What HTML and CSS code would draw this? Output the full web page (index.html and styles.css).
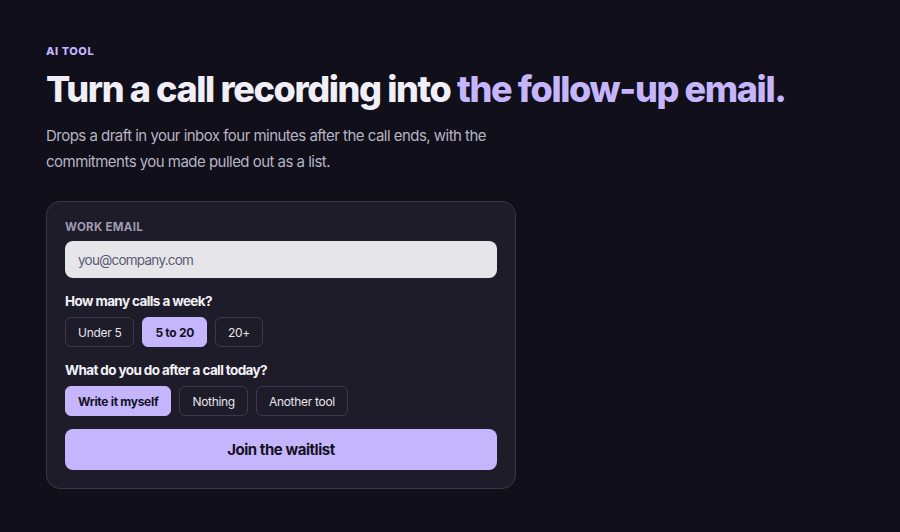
FILE: index.html
```html
<!DOCTYPE html>
<html lang="en">
<head>
<meta charset="utf-8">
<link rel="stylesheet" href="styles.css">
</head>
<body>
<main class="page">
  <p class="eyebrow">AI TOOL</p>
  <h1 class="title">Turn a call recording into <span class="accent">the follow-up email.</span></h1>
  <p class="lede">Drops a draft in your inbox four minutes after the call ends, with the commitments you made pulled out as a list.</p>
  <form class="card">
    <label class="label" for="email">WORK EMAIL</label>
    <input class="input" id="email" type="email" placeholder="you@company.com">
    <p class="question">How many calls a week?</p>
    <div class="chips">
      <button type="button" class="chip">Under 5</button>
      <button type="button" class="chip chip-on">5 to 20</button>
      <button type="button" class="chip">20+</button>
    </div>
    <p class="question">What do you do after a call today?</p>
    <div class="chips">
      <button type="button" class="chip chip-on">Write it myself</button>
      <button type="button" class="chip">Nothing</button>
      <button type="button" class="chip">Another tool</button>
    </div>
    <button type="button" class="submit">Join the waitlist</button>
  </form>
</main>
</body>
</html>
```
FILE: styles.css
```css
* { box-sizing: border-box; }
html, body { margin: 0; padding: 0; }
body {
  background: #100f1a;
  font-family: Inter, "Noto Sans", sans-serif;
  color: #ece9f5;
  height: 532px;
  overflow: hidden;
}
.page {
  padding: 44px 46px 0;
}
.eyebrow {
  margin: 0;
  font-size: 11px;
  font-weight: 800;
  letter-spacing: 0.05em;
  color: #c4b5fd;
  line-height: 14px;
}
.title {
  margin: 9px 0 0;
  font-size: 36px;
  font-weight: 800;
  letter-spacing: -0.038em;
  line-height: 44px;
  color: #f0eef7;
}
.accent { color: #c4b5fd; }
.lede {
  margin: 12px 0 0;
  max-width: 460px;
  font-size: 15px;
  line-height: 26px;
  letter-spacing: -0.035em;
  color: #b7b4c4;
}
.card {
  margin-top: 26px;
  width: 470px;
  background: #1e1c29;
  border: 1px solid #3a3848;
  border-radius: 14px;
  padding: 18px 18px 18px;
  display: flex;
  flex-direction: column;
}
.label {
  font-size: 11.5px;
  font-weight: 700;
  letter-spacing: 0.025em;
  color: #9f9bb0;
  line-height: 15px;
}
.input {
  margin-top: 6px;
  height: 37px;
  border: 0;
  border-radius: 8px;
  background: #e6e6ea;
  padding: 0 13px;
  font-family: inherit;
  font-size: 13.5px;
  letter-spacing: -0.055em;
  color: #1a1825;
}
.input::placeholder { color: #5b5970; }
.question {
  margin: 14px 0 0;
  font-size: 13.5px;
  font-weight: 700;
  line-height: 19px;
  color: #f3f1f8;
  letter-spacing: -0.045em;
}
.chips {
  margin-top: 6px;
  display: flex;
  gap: 8px;
}
.chip {
  height: 30px;
  padding: 0 12px;
  border: 1px solid #3c3a4a;
  border-radius: 6px;
  background: transparent;
  font-family: inherit;
  font-size: 12px;
  color: #e6e4ed;
  letter-spacing: -0.025em;
}
.chip-on {
  background: #c4b5fd;
  border-color: #c4b5fd;
  color: #14121d;
  font-weight: 700;
  letter-spacing: -0.025em;
}
.submit {
  margin-top: 13px;
  height: 41px;
  border: 0;
  border-radius: 8px;
  background: #c4b5fd;
  font-family: inherit;
  font-size: 15px;
  font-weight: 700;
  color: #14121d;
  letter-spacing: -0.03em;
}
```
